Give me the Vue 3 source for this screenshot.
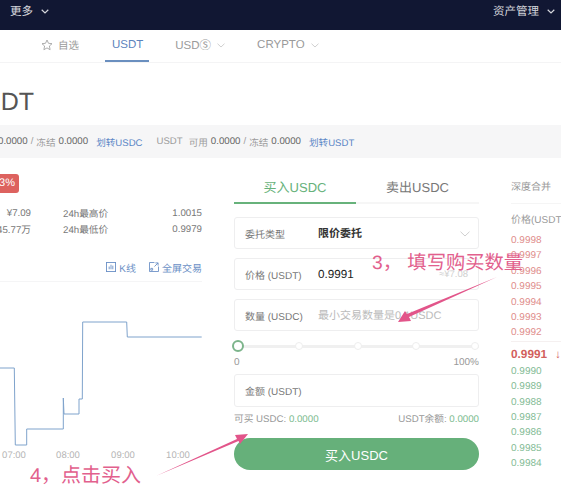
<script setup>
const asks = ['0.9998', '0.9997', '0.9996', '0.9995', '0.9994', '0.9993', '0.9992']
const bids = ['0.9990', '0.9989', '0.9988', '0.9987', '0.9986', '0.9985', '0.9984']
const points = '0,48 14.3,48 15.3,125 26.7,125 26.7,109 63.3,109 63.3,78 64,94 79,94 79,79 82.3,79 82.7,2 126.7,2 127.3,17 201.7,17'
const hours = [['07:00', 14], ['08:00', 68], ['09:00', 123], ['10:00', 178]]
</script>

<template>
  <div class="page">
    <header class="top">
      <div class="top-item">
        <span>更多</span>
        <svg class="chev" viewBox="0 0 8 5"><path d="M.7.8 4 4 7.3.8" /></svg>
      </div>
      <div class="top-item">
        <span>资产管理</span>
        <svg class="chev" viewBox="0 0 8 5"><path d="M.7.8 4 4 7.3.8" /></svg>
      </div>
    </header>

    <nav class="tabs">
      <div class="tab fav">
        <svg class="star" viewBox="0 0 12 12"><path d="M6 1 7.5 4.3 11 4.7 8.4 7 9.1 10.7 6 8.9 2.9 10.7 3.6 7 1 4.7 4.5 4.3Z" /></svg>
        <span>自选</span>
      </div>
      <div class="tab active">USDT</div>
      <div class="tab">USDⓈ <svg class="mini" viewBox="0 0 8 5"><path d="M.5.7 4 4 7.5.7" /></svg></div>
      <div class="tab">CRYPTO <svg class="mini" viewBox="0 0 8 5"><path d="M.5.7 4 4 7.5.7" /></svg></div>
    </nav>

    <h1 class="title">USDT</h1>

    <div class="balance">
      <span>0.0000</span><i>/</i><i>冻结</i><span>0.0000</span><a>划转USDC</a>
      <i class="gap">USDT</i><i>可用</i><span>0.0000</span><i>/</i><i>冻结</i><span>0.0000</span><a>划转USDT</a>
    </div>

    <main class="columns">
      <section class="market">
        <div class="badge">0.03%</div>
        <div class="stat"><span class="left">¥7.09</span><span class="name">24h最高价</span><span class="val">1.0015</span></div>
        <div class="stat"><span class="left">45.77万</span><span class="name">24h最低价</span><span class="val">0.9979</span></div>
        <div class="links">
          <a>
            <svg class="lnk" viewBox="0 0 11 11"><rect x=".5" y=".5" width="10" height="10" /><path d="M3.5 8V5M5.5 8V3M7.5 8V4" /></svg>
            K线
          </a>
          <a>
            <svg class="lnk" viewBox="0 0 11 11"><path d="M6 .5H.5v10h10V5" /><path d="M6 5 10 1M7 1h3v3M2 7h2v2H2z" /></svg>
            全屏交易
          </a>
        </div>
        <svg class="chart" viewBox="0 0 202 146">
          <polyline :points="points" />
          <text v-for="h in hours" :key="h[0]" :x="h[1]" y="138" text-anchor="middle">{{ h[0] }}</text>
        </svg>
      </section>

      <section class="order">
        <div class="switch">
          <div class="side on">买入USDC</div>
          <div class="side">卖出USDC</div>
        </div>
        <div class="field first">
          <span class="label">委托类型</span>
          <b class="strong">限价委托</b>
          <svg class="select" viewBox="0 0 10 6"><path d="M.5.7 5 5 9.5.7" /></svg>
        </div>
        <div class="field">
          <span class="label">价格 (USDT)</span>
          <span class="price">0.9991</span>
          <span class="approx">≈¥7.08</span>
        </div>
        <div class="field">
          <span class="label">数量 (USDC)</span>
          <span class="hint">最小交易数量是0.1USDC</span>
        </div>
        <div class="slider">
          <span class="knob"></span>
          <span class="dot"></span><span class="dot"></span><span class="dot"></span><span class="dot"></span>
        </div>
        <div class="scale"><span>0</span><span>100%</span></div>
        <div class="field amount"><span class="label">金额 (USDT)</span></div>
        <div class="avail">
          <span>可买 USDC: <em>0.0000</em></span>
          <span>USDT余额: <em>0.0000</em></span>
        </div>
        <button class="buy">买入USDC</button>
      </section>

      <section class="book">
        <div class="book-head">深度合并</div>
        <div class="book-col">价格(USDT)</div>
        <div class="rows asks"><span v-for="p in asks" :key="p">{{ p }}</span></div>
        <div class="last"><b>0.9991</b><b class="down">↓</b></div>
        <div class="rows bids"><span v-for="p in bids" :key="p">{{ p }}</span></div>
      </section>
    </main>

    <div class="note note3">3， 填写购买数量</div>
    <div class="note note4">4，点击买入</div>
    <svg class="arrows" viewBox="0 0 561 495">
      <path d="M497 277 409 317 411 321 398 322 405 311 407 314Z" />
      <path d="M156 476 237 439 235 435 248 434 240 444 238.500 441Z" />
    </svg>
  </div>
</template>

<style scoped>
.page {
  position: relative;
  width: 561px;
  height: 495px;
  overflow: hidden;
  background: #fff;
  color: #666;
  font-family: "Liberation Sans", "Noto Sans CJK SC", sans-serif;
  text-rendering: geometricPrecision;
}
.top {
  height: 30px;
  padding: 0 6px 8px 10px;
  box-sizing: border-box;
  display: flex;
  align-items: center;
  justify-content: space-between;
  background: #111733;
  color: #d5d6dc;
  font-size: 11.5px;
}
.top-item { display: flex; align-items: center; gap: 8px; }
.chev { width: 8px; height: 5px; fill: none; stroke: #d5d6dc; stroke-width: 1.2; }
.tabs {
  height: 33px;
  padding-left: 41px;
  box-sizing: border-box;
  display: flex;
  border-bottom: 1px solid #f4f4f5;
  font-size: 11.5px;
  color: #9a9a9a;
}
.tab {
  display: flex;
  align-items: center;
  gap: 3px;
  height: 32px;
  margin-right: 32px;
  padding-bottom: 2px;
  box-sizing: border-box;
  position: relative;
}
.fav { margin-right: 33px; gap: 5px; font-size: 10.500px; }
.star { width: 12px; height: 12px; fill: none; stroke: #9a9a9a; stroke-width: .8; }
.mini { width: 8px; height: 5px; margin-left: 3px; fill: none; stroke: #c4c4c4; stroke-width: .8; }
.active { color: #5b83bd; }
.active::after {
  content: "";
  position: absolute;
  left: -7px;
  right: -6px;
  bottom: 0;
  height: 2px;
  background: #6a8fbf;
}
.title {
  height: 62px;
  margin: 0 0 0 -34px;
  font-size: 25px;
  font-weight: 400;
  line-height: 79px;
  color: #555;
}
.balance {
  height: 33px;
  margin-left: -2px;
  display: flex;
  align-items: center;
  gap: 3px;
  background: #f6f6f7;
  font-size: 9.700px;
  white-space: nowrap;
  color: #666;
}
.balance i { font-size: 9.600px; font-style: normal; color: #9c9c9c; }
.balance a { margin-left: 5px; font-size: 9.600px; color: #5b86c6; }
.balance .gap { margin-left: 11px; margin-right: 3px; }
.columns {
  display: grid;
  grid-template-columns: 202px 245px 1fr;
  column-gap: 32px;
}
.market { padding-top: 16px; position: relative; }
.badge {
  width: 56px;
  height: 19px;
  margin-left: -37px;
  margin-bottom: 12px;
  border-radius: 3px;
  background: #dd625f;
  color: #fff;
  font-size: 11px;
  line-height: 19px;
  text-align: right;
  padding-right: 4px;
  box-sizing: border-box;
}
.stat {
  height: 16px;
  display: grid;
  grid-template-columns: 31px 32px 1fr 1fr;
  align-items: center;
  font-size: 9.700px;
  white-space: nowrap;
  color: #777;
}
.left { grid-column: 1; justify-self: end; }
.name { grid-column: 3; }
.val { grid-column: 4; justify-self: end; }
.links {
  height: 23px;
  margin-top: 22px;
  display: flex;
  justify-content: flex-end;
  gap: 13px;
  padding-top: 2px;
  box-sizing: border-box;
  border-bottom: 1px solid #f5f5f6;
  font-size: 10px;
  color: #6b90c6;
}
.links a { display: flex; gap: 3px; height: 12px; align-items: center; }
.lnk { width: 10px; height: 10px; fill: none; stroke: #6b90c6; stroke-width: 1; }
.chart { display: block; width: 202px; height: 146px; margin-top: 38px; overflow: visible; }
.chart polyline { fill: none; stroke: #7fa3cc; stroke-width: 1; }
.chart text { font-size: 9.500px; fill: #b5b5b5; }
.switch {
  height: 30px;
  margin-top: 16px;
  display: grid;
  grid-template-columns: 122px 1fr;
  border-bottom: 2px solid #f6f6f6;
  box-sizing: border-box;
  font-size: 13px;
  text-align: center;
  color: #777;
  line-height: 28px;
}
.side { height: 30px; box-sizing: border-box; }
.on { border-bottom: 2px solid #67b27b; color: #67b27b; }
.field {
  height: 32px;
  margin-top: 9px;
  padding-left: 10px;
  box-sizing: border-box;
  display: flex;
  align-items: center;
  position: relative;
  border: 1px solid #eeeeef;
  border-radius: 3px;
  font-size: 10px;
}
.first { margin-top: 13px; }
.label { width: 73px; flex: none; color: #777; white-space: nowrap; }
.strong { color: #333; font-size: 11px; font-weight: 700; }
.price { color: #222; font-size: 11.700px; }
.hint { color: #bbb; font-size: 11px; white-space: nowrap; }
.approx { position: absolute; right: 10px; font-size: 9.500px; color: #d0d0d0; }
.select {
  position: absolute;
  right: 8px;
  top: 13px;
  width: 10px;
  height: 6px;
  fill: none;
  stroke: #d0d0d0;
}
.slider {
  height: 14px;
  margin-top: 8px;
  display: flex;
  align-items: center;
  justify-content: space-between;
  background: linear-gradient(#f0f0f0, #f0f0f0) center / 100% 3px no-repeat;
}
.knob {
  width: 12px;
  height: 12px;
  margin-left: -2px;
  box-sizing: border-box;
  border: 2px solid #7cb48b;
  border-radius: 50%;
  background: #fff;
}
.dot {
  width: 8px;
  height: 8px;
  box-sizing: border-box;
  border: 1px solid #eee;
  border-radius: 50%;
  background: #fff;
}
.scale {
  margin-top: 4px;
  display: flex;
  justify-content: space-between;
  font-size: 10px;
  line-height: 11px;
  color: #999;
}
.amount { margin-top: 6px; height: 33px; }
.avail {
  margin-top: 7px;
  display: flex;
  justify-content: space-between;
  font-size: 9.700px;
  line-height: 12px;
  color: #999;
}
.avail em { font-style: normal; color: #7dbb90; }
.buy {
  display: block;
  width: 100%;
  height: 32px;
  margin-top: 12px;
  border: 0;
  border-radius: 16px;
  background: #66b07a;
  color: #fff;
  font: inherit;
  font-size: 13px;
}
.book { width: 80px; font-size: 10px; white-space: nowrap; }
.book-head {
  height: 30px;
  margin-top: 16px;
  line-height: 28px;
  color: #999;
  border-bottom: 1px solid #f5f5f5;
  box-sizing: border-box;
}
.book-col { margin-top: 11px; height: 12px; line-height: 12px; color: #999; }
.rows { display: grid; grid-auto-rows: 15.4px; line-height: 15.4px; }
.asks { margin-top: 6px; color: #e08d8b; }
.bids { color: #83bb95; }
.last {
  height: 23px;
  padding-top: 3px;
  box-sizing: border-box;
  display: flex;
  align-items: center;
  gap: 8px;
  border-top: 1px solid #f5f0f0;
  font-size: 11.800px;
  color: #d2605d;
}
.down { font-weight: 400; }
.note {
  position: absolute;
  color: #e2608d;
  font-size: 19.300px;
  line-height: 24px;
  white-space: pre;
}
.note3 { left: 372px; top: 252px; }
.note4 { left: 30px; top: 464px; font-size: 20px; }
.arrows { position: absolute; inset: 0; width: 561px; height: 495px; fill: #e2558a; pointer-events: none; }
</style>
